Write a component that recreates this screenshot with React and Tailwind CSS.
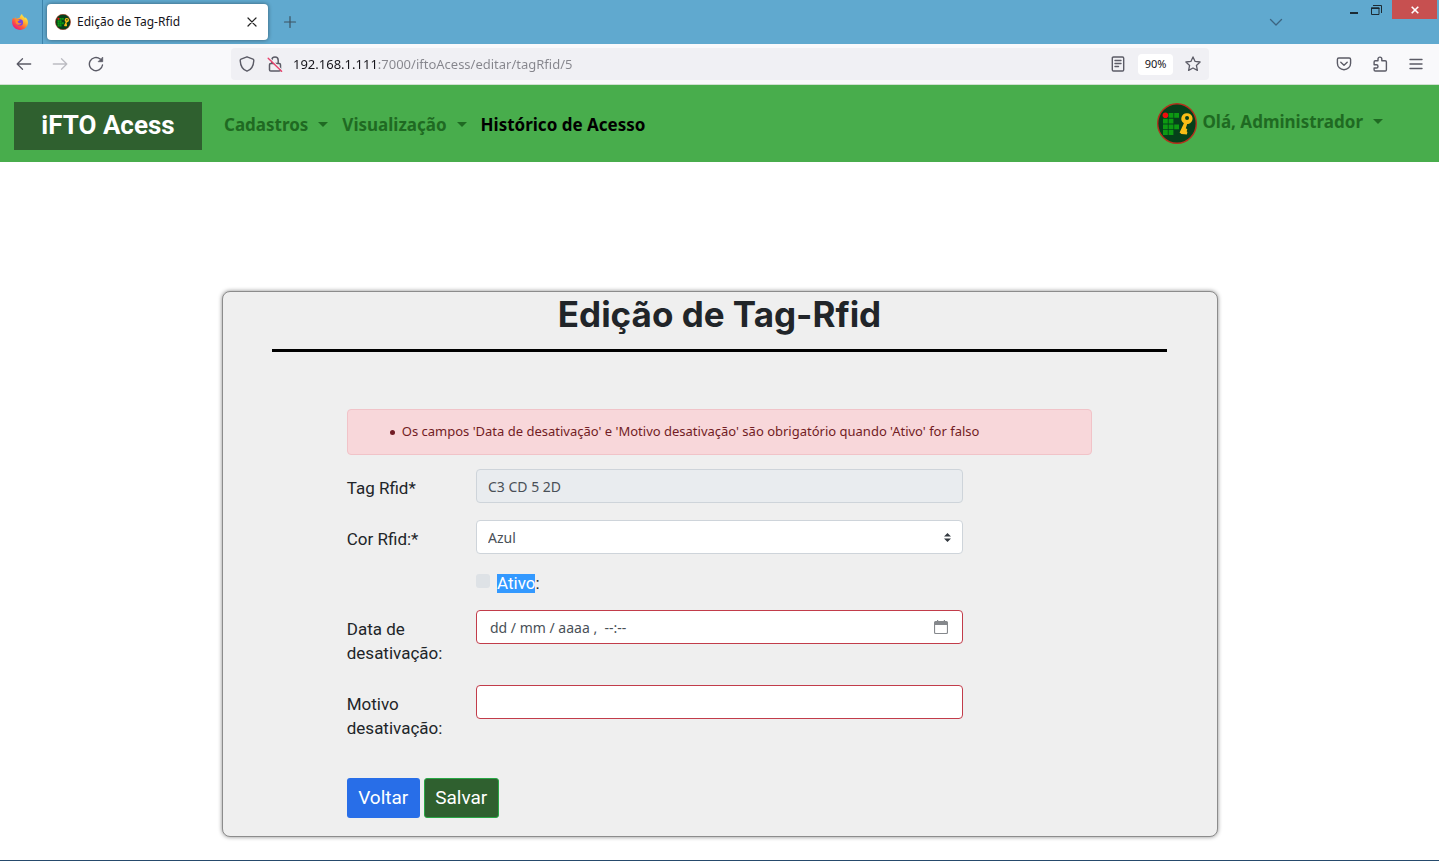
import React from "react";

const stroke = {
  fill: "none",
  stroke: "currentColor",
  strokeLinecap: "round",
  strokeLinejoin: "round",
};

function Svg({ children, className, box = "0 0 16 16", width = 1.3 }) {
  return (
    <svg viewBox={box} className={className} strokeWidth={width} {...stroke} aria-hidden="true">
      {children}
    </svg>
  );
}

function FirefoxLogo() {
  return (
    <svg viewBox="0 0 16 16" className="size-4" aria-hidden="true">
      <defs>
        <linearGradient id="fx-body" x1="0.85" y1="0.1" x2="0.2" y2="0.95">
          <stop offset="0" stopColor="#fff14a" />
          <stop offset="0.35" stopColor="#ffb02e" />
          <stop offset="0.65" stopColor="#ff5a3c" />
          <stop offset="1" stopColor="#e8187c" />
        </linearGradient>
      </defs>
      <path
        d="M1.1 3.8 2.6 5 3.2 3.2 4.8 4.7 C5.6 4 6.6 3.8 7.6 3.9 C7.8 2.3 8.9 0.9 10 0 C10.3 1.8 12 2.7 12.8 4 C13.4 4.4 13.4 3.4 13.2 3 C15 4.5 16 6.6 16 8.6 C15.8 12.8 12.4 16 8.1 16 C3.8 16 .3 12.8 .1 8.6 C0 6.9 .4 5.2 1.1 3.8Z"
        fill="url(#fx-body)"
      />
      <circle cx="7.8" cy="8.4" r="3.2" fill="#7542e5" />
      <path d="M3.8 5.6C5.2 5 6.8 5.3 7.8 6.1 7.4 7 6.2 7.2 5.6 7.6 6 9.2 8 9.6 9.6 8.6 9.2 11 5.4 11.8 4 9.2 3.3 8 3.3 6.6 3.8 5.6Z" fill="#ff8a2b" />
    </svg>
  );
}

function KeyBadge({ className }) {
  return (
    <svg viewBox="0 0 40 41" className={className} aria-hidden="true">
      <ellipse cx="20" cy="20.5" rx="19.3" ry="19.8" fill="#05401a" stroke="#b5301c" strokeWidth="1.400" />
      <path
        d="M11.600 10h4.800v4.800h-4.800zM17.200 10H22v4.800h-4.800zM6 15.700h4.800v4.800H6zM11.600 15.700h4.800v4.800h-4.800zM6 21.400h4.800v4.800H6zM11.600 21.400h4.800v4.800h-4.800zM17.200 21.400H22v4.800h-4.800zM6 27.100h4.800v4.800H6zM11.600 27.100h4.800v4.800h-4.800z"
        fill="#0d9a12"
      />
      <circle cx="8.400" cy="12.300" r="2.800" fill="#f00d0d" />
      <path
        d="M30 10.200a5.400 5.400 0 0 1 1.200 10.700l-1 .1-1.400 4.300 1.500.9-.6 2 .7.800-.5 2.500-5.500-.4-1.800-1.500 4.300-9.400A5.400 5.400 0 0 1 30 10.200zM30 13a2 2 0 1 0 .1 4A2 2 0 0 0 30 13z"
        fill="#f7bd16"
        fillRule="evenodd"
      />
    </svg>
  );
}

function Caret() {
  return (
    <svg viewBox="0 0 10 5" className="h-[5px] w-2.5" aria-hidden="true">
      <path d="M0 0h10L5 5z" fill="currentColor" />
    </svg>
  );
}

function TabStrip() {
  return (
    <div className="flex h-11 items-start bg-[#60a9cf]">
      <div className="flex h-11 w-[43px] items-center justify-center border-r border-[#3c83ab] pr-0.5">
        <FirefoxLogo />
      </div>
      <div className="mt-1 ml-1 flex h-9 w-[221px] items-center rounded bg-white pr-2 pl-2 shadow-[0_0_4px_rgba(0,0,0,0.45)]">
        <KeyBadge className="size-4" />
        <span className="ml-1.5 flex-1 text-[12px] text-[#15141a]">Edição de Tag-Rfid</span>
        <button type="button" aria-label="Fechar aba" className="flex size-4 items-center justify-center">
          <Svg className="size-4 text-[#222]" width={1.2}>
            <path d="M4 4l8 8M12 4l-8 8" />
          </Svg>
        </button>
      </div>
      <button type="button" aria-label="Nova aba" className="mt-3.5 ml-3.5 text-[#3c5361]">
        <Svg className="size-4" width={1.2}>
          <path d="M8 2.500v11M2.500 8h11" />
        </Svg>
      </button>
      <div className="flex-1" />
      <button type="button" aria-label="Listar abas" className="mt-3.5 mr-[60px] text-[#3c6480]">
        <Svg className="size-4" width={1.300}>
          <path d="M2.500 5.500 8 11l5.500-5.500" />
        </Svg>
      </button>
      <div className="flex h-[19px] items-center">
        <button type="button" aria-label="Minimizar" className="flex w-5 justify-center pt-1.5">
          <span className="h-0.5 w-2 bg-[#1c2a33]" />
        </button>
        <button type="button" aria-label="Restaurar" className="mr-0.5 flex w-[26px] justify-end pr-1">
          <svg viewBox="0 0 11 10" className="mr-1 h-2.5 w-[11px]" aria-hidden="true">
            <path d="M2 .5h8.500V8" fill="none" stroke="#1c2a33" />
            <path d="M.5 3v6.500h7.500V3z" fill="none" stroke="#1c2a33" />
            <path d="M0 2.500h8.500v1.500H0z" fill="#1c2a33" />
          </svg>
        </button>
        <button type="button" aria-label="Fechar" className="mr-0.5 flex h-[19px] w-[45px] items-center justify-center bg-[#c75050]">
          <svg viewBox="0 0 8 8" className="size-2" aria-hidden="true">
            <path d="M.7.7l6.600 6.600M7.300.7.7 7.300" stroke="#fff" strokeWidth="1.600" />
          </svg>
        </button>
      </div>
    </div>
  );
}

function AddressBar() {
  return (
    <div className="flex h-[41px] items-center border-b border-[#d0e0d0] bg-[#f9f9fb] text-[#5b5b66]">
      <div className="flex w-[231px] items-center gap-5 pl-4">
        <button type="button" aria-label="Voltar uma página">
          <Svg className="size-4"><path d="M1.200 8h13.500M6.500 2.800 1.200 8l5.300 5.200" /></Svg>
        </button>
        <button type="button" aria-label="Avançar uma página" className="text-[#bcbcc2]">
          <Svg className="size-4"><path d="M1.300 8h13.500M9.500 2.800 14.800 8l-5.300 5.200" /></Svg>
        </button>
        <button type="button" aria-label="Recarregar">
          <Svg className="size-4" width={1.400}>
            <path d="M14.500 9A6.600 6.600 0 1 1 12.200 3" />
            <path d="M14.700 1.500v4.200h-4.200z" fill="currentColor" strokeWidth="0.800" />
          </Svg>
        </button>
      </div>
      <div className="flex h-8 min-w-0 flex-1 items-center rounded bg-[#f0f0f4] px-2">
        <Svg className="size-4" width={1.400}>
          <path d="M8 .8 14 3.200c.6.300.8.800.8 1.400C14.500 10 11.500 14 8 15.200 4.500 14 1.500 10 1.200 4.600c0-.6.200-1.100.8-1.400z" />
        </Svg>
        <Svg className="ml-3 size-4" width={1.500}>
          <path d="M3.800 7.500h8.400c.8 0 1.300.5 1.300 1.300v4.900c0 .8-.5 1.300-1.300 1.300H3.800c-.8 0-1.300-.5-1.300-1.300V8.800c0-.8.5-1.300 1.300-1.300zM4.800 7.300V4.200a3.200 3.200 0 0 1 6.400 0v3.100" />
          <path d="M2 1.500 15 14.200" stroke="#f0f0f4" strokeWidth="1.200" />
          <path d="M1.200 2.200 14.600 15.200" stroke="#e8416c" strokeWidth="1.400" />
        </Svg>
        <input
          aria-label="Endereço"
          defaultValue="192.168.1.111:7000/iftoAcess/editar/tagRfid/5"
          className="ml-2.5 h-6 min-w-0 flex-1 bg-[linear-gradient(90deg,#15141a_85px,#85858c_85px)] bg-clip-text text-[13px] text-transparent"
        />
        <button type="button" aria-label="Modo de leitura">
          <Svg className="size-4" width={1.400}>
            <path d="M3.500 1h9c.7 0 1.200.5 1.200 1.200v11.600c0 .7-.5 1.200-1.200 1.200h-9c-.7 0-1.200-.5-1.200-1.200V2.200C2.300 1.500 2.800 1 3.500 1zM5 4.500h6M5 7.500h6M5 10.500h3.500" />
          </Svg>
        </button>
        <button type="button" className="ml-3 h-[21px] w-[35px] rounded-sm bg-white text-[11px] text-[#15141a]">90%</button>
        <button type="button" aria-label="Favoritar" className="ml-3">
          <Svg className="size-4" width={1.300}>
            <path d="M8 .9l2.100 4.500 5 .6-3.700 3.400 1 5L8 12l-4.400 2.400 1-5L.9 6l5-.6z" />
          </Svg>
        </button>
      </div>
      <div className="flex w-[230px] items-center justify-end gap-5 pr-[15px]">
        <button type="button" aria-label="Pocket">
          <Svg className="size-4" width={1.400}>
            <path d="M2.800 2h10.400c.8 0 1.400.6 1.400 1.400v3.800a6.600 6.600 0 0 1-13.200 0V3.400C1.400 2.600 2 2 2.800 2z" />
            <path d="M4.800 6.200 8 9.200l3.200-3" />
          </Svg>
        </button>
        <button type="button" aria-label="Extensões">
          <Svg className="size-4" width={1.400}>
            <path d="M6 4.800V3a1.900 1.900 0 0 1 3.800 0v1.800h3.400c.7 0 1.200.5 1.200 1.200v7.800c0 .7-.5 1.200-1.200 1.200H3.300c-.7 0-1.200-.5-1.200-1.200V12h2.300a1.600 1.600 0 0 0 0-3.200H2.100V6c0-.7.5-1.200 1.200-1.200z" />
          </Svg>
        </button>
        <button type="button" aria-label="Menu">
          <Svg className="size-4" width={1.400}><path d="M2 3.500h12M2 8h12M2 12.500h12" /></Svg>
        </button>
      </div>
    </div>
  );
}

function NavBar() {
  return (
    <nav className="flex h-[77px] items-center bg-[#48ad4c] pr-14 pl-3.5 text-[17px] font-bold text-[#1f6a22]">
      <a href="#inicio" className="mt-1 flex h-12 w-[188px] items-center justify-center bg-[#2f602f] font-[Roboto,sans-serif] text-[26px] font-bold text-white">
        iFTO Acess
      </a>
      <div className="mt-0.5 ml-[22px] flex flex-1 items-center gap-3.5">
        <button type="button" className="flex items-center gap-2.5">Cadastros <Caret /></button>
        <button type="button" className="flex items-center gap-2.5">Visualização <Caret /></button>
        <a href="#historico" className="text-black">Histórico de Acesso</a>
      </div>
      <button type="button" className="flex items-center gap-[5px]">
        <KeyBadge className="h-[41px] w-10" />
        <span className="mb-1 flex items-center gap-2.5">Olá, Administrador <Caret /></span>
      </button>
    </nav>
  );
}

function Row({ id, label, className, children }) {
  return (
    <div className={`-mx-[15px] flex ${className}`}>
      <label htmlFor={id} className="w-1/6 pt-[7px] pl-[15px] font-[Roboto,sans-serif] text-[17px] leading-6">
        {label}
      </label>
      <div className="w-2/3 px-[15px]">{children}</div>
    </div>
  );
}

function TagForm() {
  return (
    <form className="mx-auto w-3/4 pt-[57px] pb-[18px]" onSubmit={(e) => e.preventDefault()}>
      <ul role="alert" className="flex h-[46px] items-center rounded-sm border border-[#f1c3c8] bg-[#f8d7da] pl-[42px] text-[13px] text-[#721c24]">
        <li className="flex items-center gap-[7px]">
          <span className="size-[5px] rounded-full bg-[#721c24]" />
          Os campos 'Data de desativação' e 'Motivo desativação' são obrigatório quando 'Ativo' for falso
        </li>
      </ul>
      <Row id="tag" label="Tag Rfid*" className="mt-3.5">
        <input id="tag" readOnly defaultValue="C3 CD 5 2D" className="h-[34px] w-full rounded border border-[#ced4da] bg-[#e9ecef] px-[11px] text-[14px] text-[#495057]" />
      </Row>
      <Row id="cor" label="Cor Rfid:*" className="mt-[17px]">
        <div className="relative">
          <select id="cor" defaultValue="Azul" className="h-[34px] w-full appearance-none rounded border border-[#ced4da] bg-white px-[11px] text-[14px] text-[#495057]">
            <option>Azul</option>
          </select>
          <svg viewBox="0 0 7 9" className="pointer-events-none absolute top-[13px] right-3 h-[9px] w-[7px]" aria-hidden="true">
            <path d="M0 3.600 3.500 0 7 3.600zM0 5.400h7L3.500 9z" fill="#343a40" />
          </svg>
        </div>
      </Row>
      <div className="-mx-[15px] mt-[17px] flex">
        <div className="ml-[16.667%] flex h-6 items-center px-[15px]">
          <input id="ativo" type="checkbox" disabled className="mb-1 size-3.5 appearance-none rounded-[3px] bg-[#dee2e6]" />
          <label htmlFor="ativo" className="ml-[7px] font-[Roboto,sans-serif] text-[17px] leading-[19px]">
            <span className="inline-block bg-[#3399ff] text-white">Ativo</span>:
          </label>
        </div>
      </div>
      <Row id="data" label="Data de desativação:" className="mt-[15px]">
        <div className="flex h-[34px] items-center rounded border border-[#c23c4a] bg-white pr-3.5 pl-[13px]">
          <input id="data" placeholder="dd / mm / aaaa ,  --:--" className="min-w-0 flex-1 text-[14px] placeholder:text-[#495057]" />
          <button type="button" aria-label="Abrir calendário">
            <svg viewBox="0 0 14 14" className="size-3.5" aria-hidden="true">
              <path d="M1.500 1H3V0h1.200v1h5.600V0H11v1h1.500Q14 1 14 2.500v10q0 1.500-1.500 1.500h-11Q0 14 0 12.500v-10Q0 1 1.500 1zM1.100 5v7.300q0 .6.600.6h10.600q.6 0 .6-.6V5z" fill="#85888c" fillRule="evenodd" />
            </svg>
          </button>
        </div>
      </Row>
      <Row id="motivo" label="Motivo desativação:" className="mt-5">
        <input id="motivo" className="h-[34px] w-full rounded border border-[#c23c4a] bg-white px-[11px] text-[14px]" />
      </Row>
      <div className="mt-[38px] flex gap-1 font-[Roboto,sans-serif] text-[19px] text-white">
        <button type="button" className="h-10 w-[73px] rounded-[3px] bg-[#286ee8]">Voltar</button>
        <button type="submit" className="h-10 w-[75px] rounded-[3px] border border-[#28a745] bg-[#2f602f]">Salvar</button>
      </div>
    </form>
  );
}

export default function App() {
  return (
    <div className="flex min-h-screen flex-col border-b border-[#264a6c] bg-white font-['Noto_Sans',sans-serif] text-[#212529]">
      <header>
        <TabStrip />
        <AddressBar />
        <NavBar />
      </header>
      <main className="px-6 pt-[129px] pb-[23px]">
        <section className="mx-auto w-full max-w-[996px] rounded-lg border border-[#8c8c8c] bg-[#efefef] shadow-[0_0_4px_rgba(0,0,0,0.45)]">
          <h1 className="mx-auto flex h-[60px] w-[90%] justify-center border-b-[3px] border-black font-[Inter,sans-serif] text-[35px] leading-[44px] font-bold">
            Edição de Tag-Rfid
          </h1>
          <TagForm />
        </section>
      </main>
    </div>
  );
}
